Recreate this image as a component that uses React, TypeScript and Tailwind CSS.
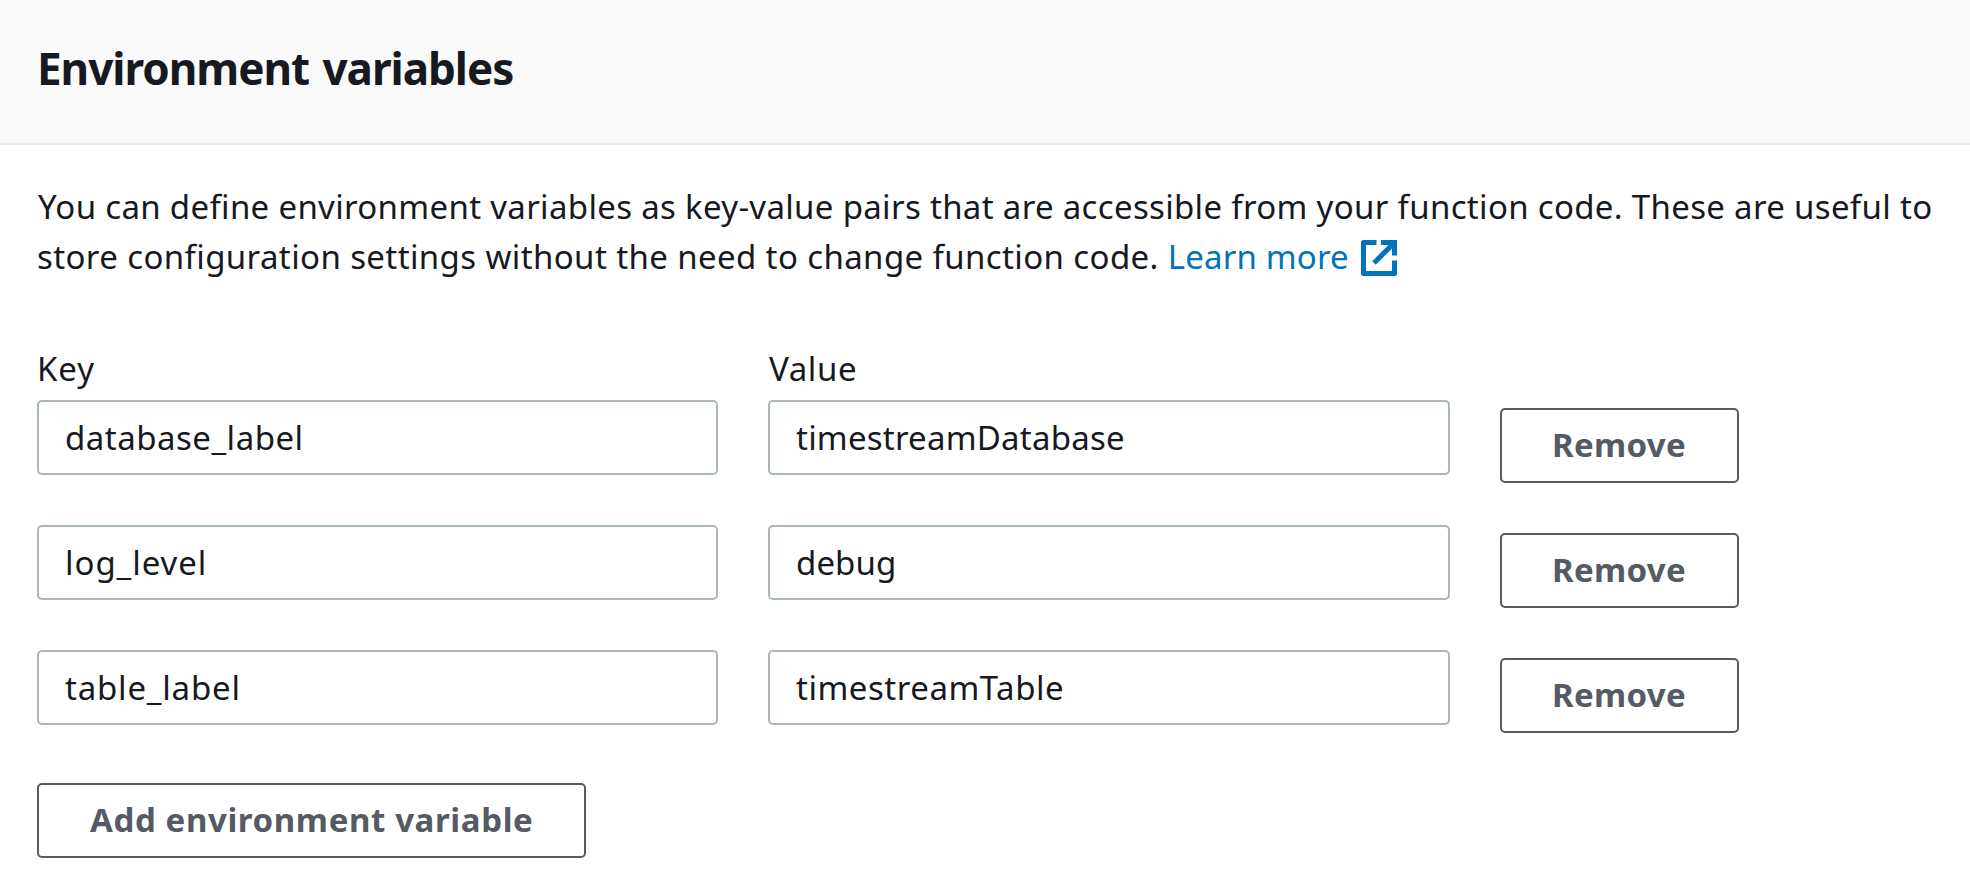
import React from "react";

type Variable = {
  name: string;
  value: string;
  nameTracking: string;
  valueTracking: string;
};

const variables: Variable[] = [
  {
    name: "database_label",
    value: "timestreamDatabase",
    nameTracking: "tracking-[0.5px]",
    valueTracking: "tracking-[0.22px]",
  },
  {
    name: "log_level",
    value: "debug",
    nameTracking: "tracking-[0.95px]",
    valueTracking: "tracking-[0.1px]",
  },
  {
    name: "table_label",
    value: "timestreamTable",
    nameTracking: "tracking-[0.8px]",
    valueTracking: "tracking-[0.53px]",
  },
];

function ExternalIcon() {
  return (
    <svg
      className="ml-3 inline-block h-9 w-9 align-[-7px]"
      viewBox="0 0 36 36"
      fill="none"
      stroke="currentColor"
      strokeWidth="5"
      aria-hidden="true"
    >
      <path d="M15.5 2.5H2.5V33.5H33.5V20.5" strokeLinejoin="round" />
      <path d="M20 2.5H33.5V15.5" />
      <path d="M13 23L32 4" />
    </svg>
  );
}

function TextField({ value, tracking, width }: { value: string; tracking: string; width: string }) {
  return (
    <div className={`flex h-[75px] items-center rounded-[5px] border-2 border-[#aab7b8] bg-white pl-[26px] ${width}`}>
      <span className={tracking}>{value}</span>
    </div>
  );
}

function Button({ children, className }: { children: React.ReactNode; className: string }) {
  return (
    <button
      type="button"
      className={`flex h-[75px] items-center rounded-[5px] border-2 border-[#545b64] bg-white pb-px font-bold text-[#545b64] ${className}`}
    >
      {children}
    </button>
  );
}

export default function App() {
  return (
    <div className="h-[880px] w-[1970px] overflow-hidden bg-white font-['Noto_Sans',sans-serif] text-[33px] leading-[50px] text-[#16191f]">
      <header className="h-[145px] border-b-2 border-[#eaeded] bg-[#fafafa] pt-10 pl-[37px]">
        <h2 className="text-[44px] leading-[56px] font-bold tracking-[-1.02px] [word-spacing:3px]">
          Environment variables
        </h2>
      </header>

      <main className="pt-[37px] pl-[37px]">
        <p className="whitespace-nowrap">
          <span className="block pl-px tracking-[0.32px]">
            You can define environment variables as key-value pairs that are accessible from your function code. These are useful to
          </span>
          <span className="block h-[50px] tracking-[0.385px]">
            store configuration settings without the need to change function code.{" "}
            <a className="tracking-[0.16px] text-[#0073bb]" href="#learn-more">
              Learn more
              <ExternalIcon />
            </a>
          </span>
        </p>

        <div className="mt-[62px] flex gap-[50px] pb-[6px]">
          <span className="w-[681px] tracking-[0.9px]">Key</span>
          <span className="pl-px tracking-[0.6px]">Value</span>
        </div>

        <div className="flex flex-col gap-[50px]">
          {variables.map((v) => (
            <div key={v.name} className="flex h-[75px] gap-[50px]">
              <TextField value={v.name} tracking={v.nameTracking} width="w-[681px]" />
              <TextField value={v.value} tracking={v.valueTracking} width="w-[682px]" />
              <Button className="mt-2 w-[239px] pl-[50px] tracking-[0.33px]">Remove</Button>
            </div>
          ))}
        </div>

        <Button className="mt-[58px] w-[549px] pl-[51px] tracking-[0.61px]">Add environment variable</Button>
      </main>
    </div>
  );
}
